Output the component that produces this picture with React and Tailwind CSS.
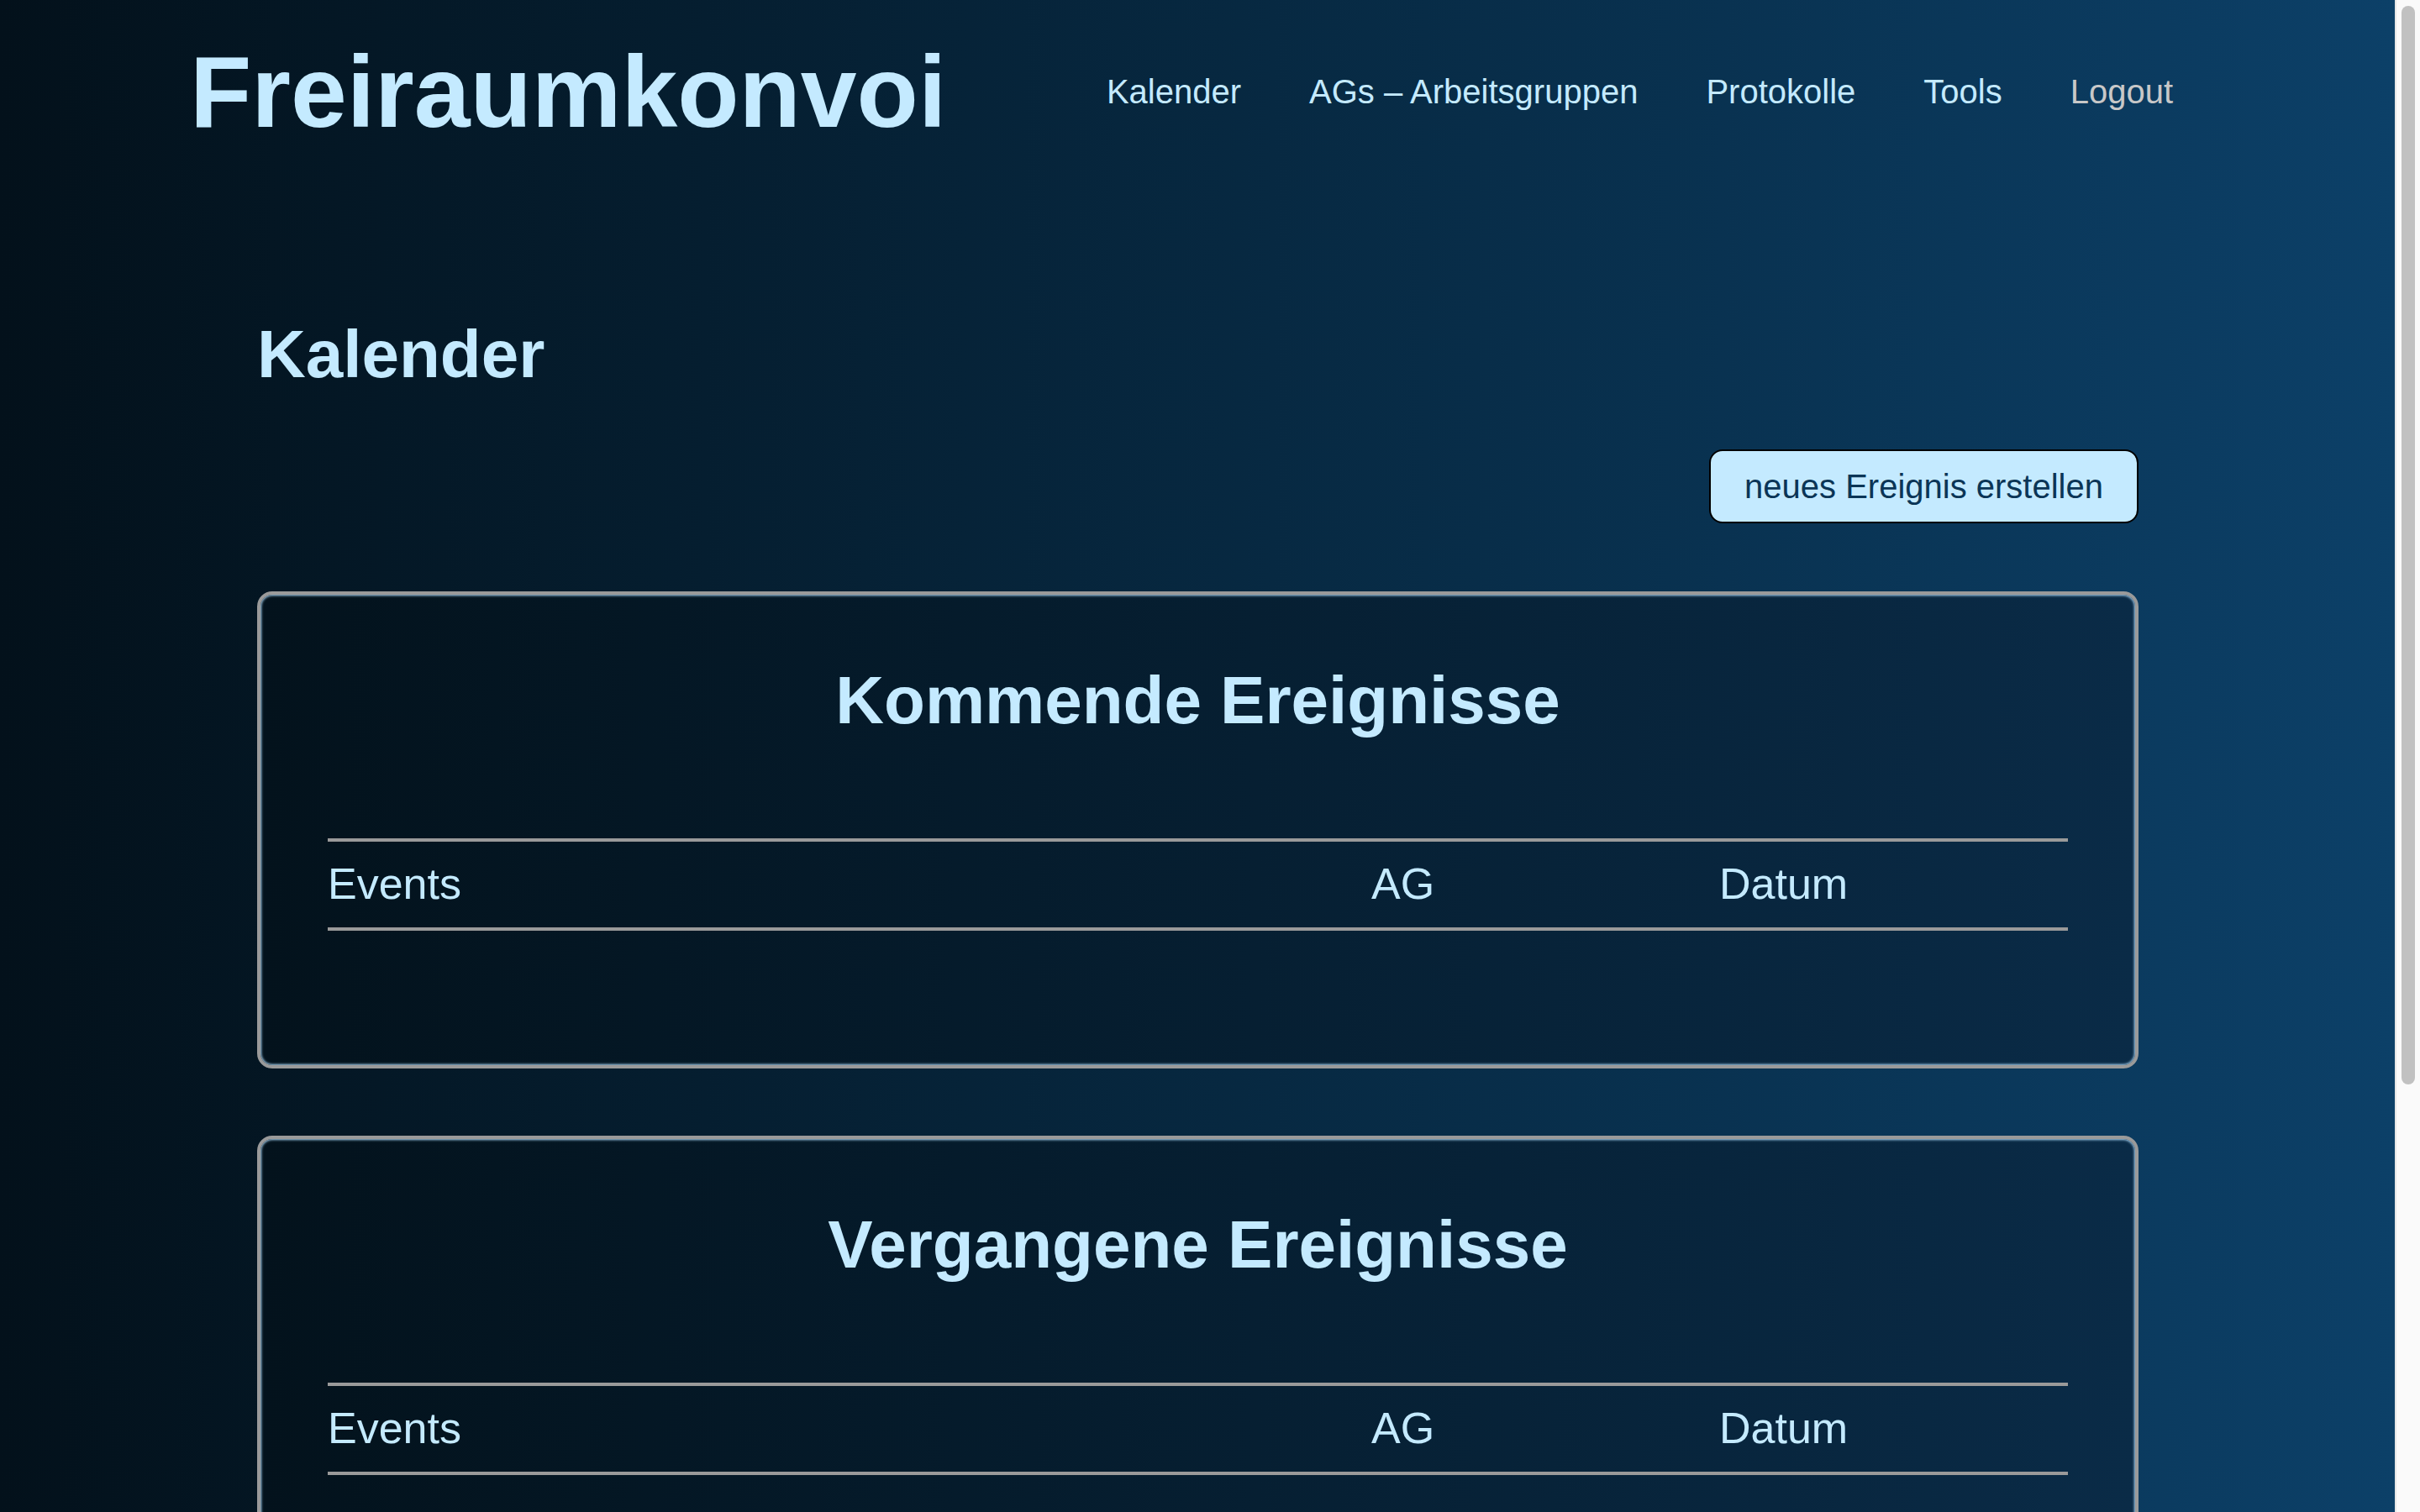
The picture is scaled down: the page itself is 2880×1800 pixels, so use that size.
import React from 'react';

const navLinks = [
  { label: 'Kalender' },
  { label: 'AGs – Arbeitsgruppen' },
  { label: 'Protokolle' },
  { label: 'Tools' },
  { label: 'Logout', muted: true },
];

const EventCard = ({ title }) => (
  <section className="rounded-[18px] border-4 border-[#9a9a9a] bg-gradient-to-r from-[#03121c] to-[#0a2b47] px-[80px] pt-[80px] pb-[160px] shadow-[inset_0_0_3px_1px_#a9d6f5]">
    <h3 className="text-center text-[80px] font-bold leading-[92px] text-[#c4eaff]">{title}</h3>
    <div className="mt-[118px] grid grid-cols-[1242px_414px_1fr] border-y-4 border-[#9a9a9a] pt-[20px] pb-[22px] text-[52px] leading-[60px] text-[#c4eaff]">
      <div>Events</div>
      <div>AG</div>
      <div>Datum</div>
    </div>
  </section>
);

const App = () => {
  return (
    <div className="flex h-screen overflow-hidden font-['Liberation_Sans',Arial,sans-serif]">
      <div className="flex-1 overflow-hidden bg-gradient-to-r from-[#03111b] to-[#0c4068]">
        <header className="flex items-center justify-between pt-[40px] pl-[226px] pr-[264px]">
          <h1 className="text-[120px] font-bold leading-[138px] text-[#c4eaff]">Freiraumkonvoi</h1>
          <nav className="flex gap-[81px] text-[40px] leading-[46px]">
            {navLinks.map((l) => (
              <a key={l.label} className={l.muted ? 'text-[#c8c8c8]' : 'text-[#c4eaff]'}>
                {l.label}
              </a>
            ))}
          </nav>
        </header>

        <main className="pl-[306px] pr-[305px]">
          <h2 className="mt-[198px] text-[80px] font-bold leading-[92px] text-[#c4eaff]">Kalender</h2>

          <div className="mt-[67px] flex justify-end">
            <button className="rounded-[16px] border-2 border-black bg-[#c4eaff] px-[40px] py-[19px] text-[40px] leading-[46px] text-[#0b3556]">
              neues Ereignis erstellen
            </button>
          </div>

          <div className="mt-[81px] flex flex-col gap-[80px]">
            <EventCard title="Kommende Ereignisse" />
            <EventCard title="Vergangene Ereignisse" />
          </div>
        </main>
      </div>

      {/* fake scrollbar */}
      <div className="w-[30px] border-l-2 border-[#e6e6e6] bg-[#fafafa] px-[6px] pt-[7px]">
        <div className="h-[1284px] w-[16px] rounded-full bg-[#c1c1c1]" />
      </div>
    </div>
  );
};

export default App;
